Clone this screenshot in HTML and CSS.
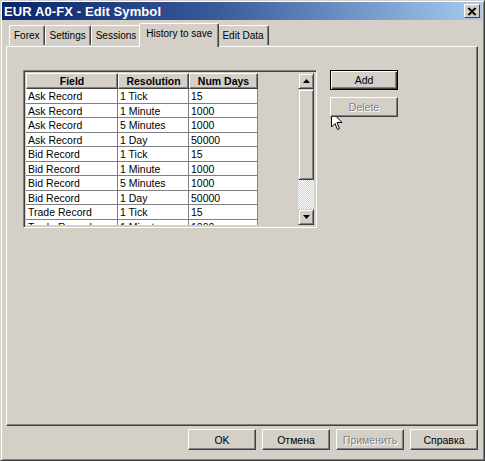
FILE: index.html
```html
<!DOCTYPE html>
<html>
<head>
<meta charset="utf-8">
<link rel="stylesheet" href="styles.css">
</head>
<body>
<div class="window">
  <div class="titlebar">
    <span class="title">EUR A0-FX - Edit Symbol</span>
    <span class="close">
      <svg width="10" height="9" viewBox="0 0 10 9"><path d="M1 1 L8 8 M2 1 L9 8 M8 1 L1 8 M9 1 L2 8" stroke="#000" stroke-width="1.2"/></svg>
    </span>
  </div>
  <div class="content">
    <div class="tabs">
      <div class="tab first">Forex</div>
      <div class="tab">Settings</div>
      <div class="tab">Sessions</div>
      <div class="tab active">History to save</div>
      <div class="tab">Edit Data</div>
    </div>
    <div class="panel">
      <div class="list">
        <div class="grid-area">
          <div class="grid">
            <div class="hcell">Field</div><div class="hcell">Resolution</div><div class="hcell">Num Days</div>
            <div class="cell">Ask Record</div><div class="cell">1 Tick</div><div class="cell">15</div>
            <div class="cell">Ask Record</div><div class="cell">1 Minute</div><div class="cell">1000</div>
            <div class="cell">Ask Record</div><div class="cell">5 Minutes</div><div class="cell">1000</div>
            <div class="cell">Ask Record</div><div class="cell">1 Day</div><div class="cell">50000</div>
            <div class="cell">Bid Record</div><div class="cell">1 Tick</div><div class="cell">15</div>
            <div class="cell">Bid Record</div><div class="cell">1 Minute</div><div class="cell">1000</div>
            <div class="cell">Bid Record</div><div class="cell">5 Minutes</div><div class="cell">1000</div>
            <div class="cell">Bid Record</div><div class="cell">1 Day</div><div class="cell">50000</div>
            <div class="cell">Trade Record</div><div class="cell">1 Tick</div><div class="cell">15</div>
            <div class="cell">Trade Record</div><div class="cell">1 Minute</div><div class="cell">1000</div>
          </div>
        </div>
        <div class="scrollbar">
          <div class="sbtn"><svg width="7" height="4" viewBox="0 0 7 4"><path d="M3.5 0 L7 4 L0 4 Z" fill="#000"/></svg></div>
          <div class="thumb"></div>
          <div class="track"></div>
          <div class="sbtn"><svg width="7" height="4" viewBox="0 0 7 4"><path d="M0 0 L7 0 L3.5 4 Z" fill="#000"/></svg></div>
        </div>
      </div>
      <div class="side">
        <div class="btn default">Add</div>
        <div class="btn disabled">Delete</div>
      </div>
    </div>
    <div class="footer">
      <div class="btn big">OK</div>
      <div class="btn big">Отмена</div>
      <div class="btn big disabled">Применить</div>
      <div class="btn big">Справка</div>
    </div>
  </div>
  <svg class="cursor" width="12" height="20" viewBox="0 0 12 20"><path d="M0.5 0.5 L0.5 16 L4 12.5 L6.5 18.5 L8.5 17.5 L6 11.5 L11 11.5 Z" fill="#fff" stroke="#000" stroke-width="1"/></svg>
</div>
</body>
</html>
```
FILE: styles.css
```css
* { box-sizing: border-box; }
html, body { margin: 0; padding: 0; }
body {
  width: 485px;
  height: 461px;
  overflow: hidden;
  background: #d4d0c8;
  font-family: "Liberation Sans", Arial, sans-serif;
  font-size: 10.5px;
  color: #000;
}
.window {
  position: relative;
  width: 485px;
  height: 461px;
  background: #d4d0c8;
  border-top: 1px solid #d4d0c8;
  border-left: 1px solid #d4d0c8;
  border-right: 1px solid #404040;
  border-bottom: 1px solid #404040;
  box-shadow: inset 1px 1px 0 #fff, inset -1px -1px 0 #808080;
  padding: 1px 2px 2px 1px;
  display: flex;
  flex-direction: column;
}
.titlebar {
  height: 18px;
  background: linear-gradient(to right, #0a246a 0%, #3a5a9a 45%, #a6caf0 100%);
  display: flex;
  align-items: center;
  justify-content: space-between;
  padding: 0 2px 0 2px;
}
.title {
  color: #fff;
  font-weight: bold;
  font-size: 13px;
  letter-spacing: 0.1px;
}
.close {
  width: 16px;
  height: 14px;
  background: #d4d0c8;
  border-top: 1px solid #fff;
  border-left: 1px solid #fff;
  border-right: 1px solid #404040;
  border-bottom: 1px solid #404040;
  display: flex;
  align-items: center;
  justify-content: center;
}
.content {
  flex: 1;
  display: flex;
  flex-direction: column;
  padding: 2px 4px 0 4px;
}
.tabs {
  display: flex;
  align-items: flex-end;
  height: 24px;
  padding-left: 3px;
  position: relative;
  z-index: 2;
}
.tab {
  height: 20px;
  padding: 4px 4px 0 4px;
  font-size: 10px;
  border-top: 1px solid #fff;
  border-left: 1px solid #fff;
  border-right: 1px solid #404040;
  box-shadow: inset -1px 0 0 #808080;
  border-radius: 2px 2px 0 0;
  margin-bottom: 1px;
  white-space: nowrap;
}
.tab.active {
  height: 24px;
  padding-top: 4px;
  margin: 0 -2px -1px -2px;
  padding-left: 6px;
  padding-right: 6px;
  background: #d4d0c8;
  position: relative;
  z-index: 3;
}
.panel {
  height: 380px;
  border-top: 1px solid #fff;
  border-left: 1px solid #fff;
  border-right: 1px solid #404040;
  border-bottom: 1px solid #404040;
  box-shadow: inset -1px -1px 0 #808080;
  display: flex;
  align-items: flex-start;
  padding: 23px 0 0 16px;
  gap: 13px;
  position: relative;
  z-index: 1;
}
.list {
  width: 294px;
  height: 158px;
  border-top: 1px solid #808080;
  border-left: 1px solid #808080;
  border-right: 1px solid #fff;
  border-bottom: 1px solid #fff;
  box-shadow: inset 1px 1px 0 #404040, inset -1px -1px 0 #d4d0c8;
  padding: 2px;
  display: flex;
}
.grid-area {
  flex: 1;
  overflow: hidden;
  background: #d4d0c8;
}
.grid {
  display: grid;
  grid-template-columns: 92px 71px 69px;
  grid-template-rows: 16px;
  grid-auto-rows: 14.5px;
  width: 232px;
}
.hcell {
  background: #d4d0c8;
  font-weight: bold;
  text-align: center;
  line-height: 14px;
  border-top: 1px solid #fff;
  border-left: 1px solid #fff;
  border-right: 1px solid #404040;
  border-bottom: 1px solid #404040;
  box-shadow: inset -1px -1px 0 #808080;
}
.cell {
  background: #fff;
  border-right: 1px solid #808080;
  border-bottom: 1px solid #808080;
  padding-left: 2px;
  line-height: 14px;
  white-space: nowrap;
  overflow: hidden;
}
.scrollbar {
  width: 16px;
  display: flex;
  flex-direction: column;
}
.sbtn {
  height: 16px;
  background: #d4d0c8;
  border-top: 1px solid #d4d0c8;
  border-left: 1px solid #d4d0c8;
  border-right: 1px solid #404040;
  border-bottom: 1px solid #404040;
  box-shadow: inset 1px 1px 0 #fff, inset -1px -1px 0 #808080;
  display: flex;
  align-items: center;
  justify-content: center;
}
.thumb {
  height: 91px;
  background: #d4d0c8;
  border-top: 1px solid #d4d0c8;
  border-left: 1px solid #d4d0c8;
  border-right: 1px solid #404040;
  border-bottom: 1px solid #404040;
  box-shadow: inset 1px 1px 0 #fff, inset -1px -1px 0 #808080;
}
.track {
  flex: 1;
  background-color: #e8e6e2;
  background-image: repeating-conic-gradient(#d4d0c8 0 25%, #ffffff 0 50%);
  background-size: 2px 2px;
}
.side {
  display: flex;
  flex-direction: column;
  gap: 7px;
}
.btn {
  width: 68px;
  height: 20px;
  background: #d4d0c8;
  border-top: 1px solid #fff;
  border-left: 1px solid #fff;
  border-right: 1px solid #404040;
  border-bottom: 1px solid #404040;
  box-shadow: inset -1px -1px 0 #808080;
  display: flex;
  align-items: center;
  justify-content: center;
}
.btn.default {
  border: 1px solid #000;
  box-shadow: inset 1px 1px 0 #fff, inset -1px -1px 0 #404040, inset -2px -2px 0 #808080;
}
.btn.disabled {
  color: #808080;
  text-shadow: 1px 1px 0 #fff;
}
.footer {
  display: flex;
  justify-content: flex-end;
  gap: 6px;
  padding: 3px 0 0 0;
}
.btn.big {
  width: 68px;
  height: 21px;
}
.cursor {
  position: absolute;
  left: 330px;
  top: 110px;
}
```
